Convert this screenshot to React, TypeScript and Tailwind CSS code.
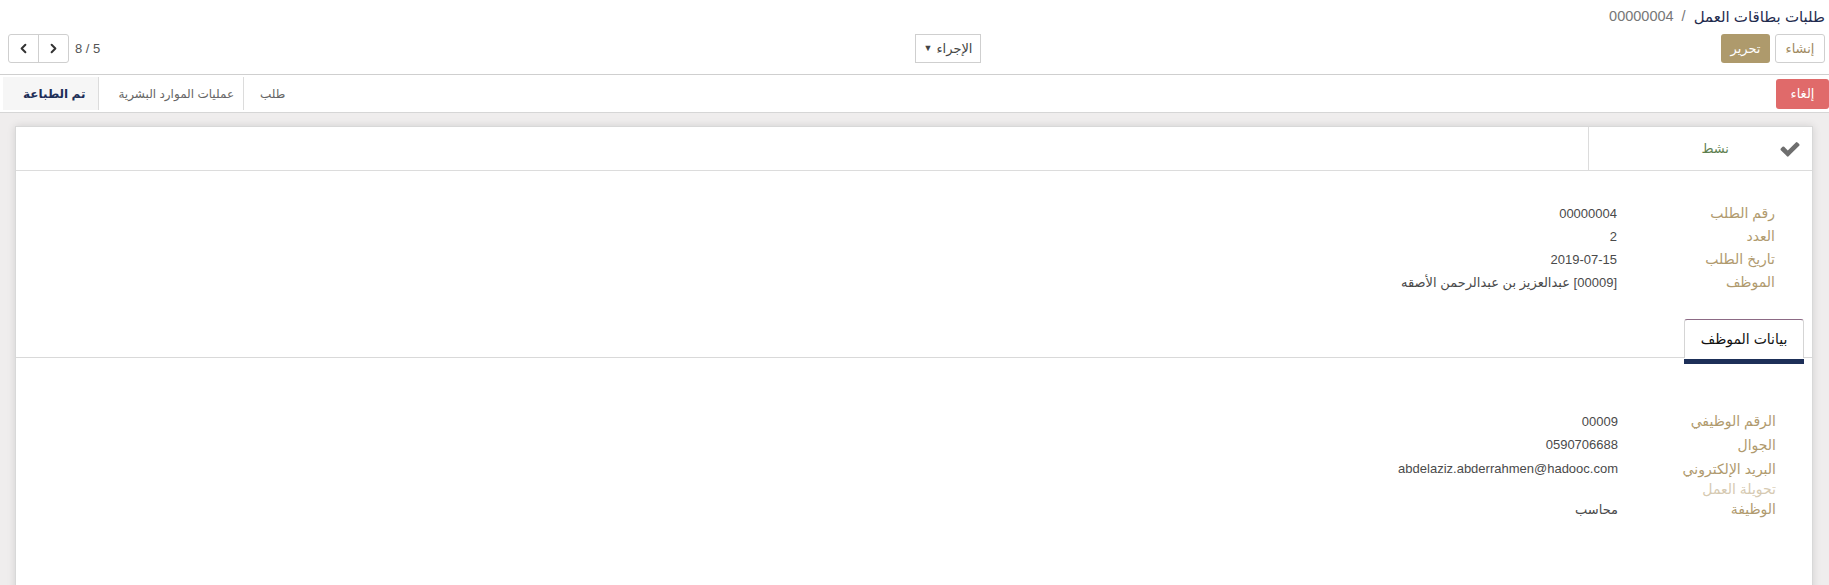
import { ChevronLeft, ChevronRight } from 'lucide-react';

const mainFields = [
  { label: 'رقم الطلب', value: '00000004' },
  { label: 'العدد', value: '2' },
  { label: 'تاريخ الطلب', value: '2019-07-15' },
  { label: 'الموظف', value: '[00009] عبدالعزيز بن عبدالرحمن الأصقه' },
];

const employeeFields = [
  { label: 'الرقم الوظيفي', value: '00009', h: 'h-[23px]' },
  { label: 'الجوال', value: '0590706688', h: 'h-[24px]' },
  { label: 'البريد الإلكتروني', value: 'abdelaziz.abderrahmen@hadooc.com', h: 'h-[24px]' },
  { label: 'تحويلة العمل', value: '', h: 'h-[17px]' },
  { label: 'الوظيفة', value: 'محاسب', h: 'h-[23px]' },
];

const FieldRow = ({ label, value, h = 'h-[23px]' }: { label: string; value: string; h?: string }) => (
  <div className={`flex items-center ${h}`}>
    <span className={`w-[158px] shrink-0 text-[14px] ${value ? 'text-[#b09a6e]' : 'text-[#d6cab2]'}`}>{label}</span>
    <span className="text-[#4a4a4a]">{value}</span>
  </div>
);

const App = () => {
  return (
    <div
      dir="rtl"
      className="h-[585px] w-full overflow-hidden bg-[#efeded] text-[13px] text-[#4c4c4c] [font-family:'Liberation_Sans','DejaVu_Sans',sans-serif]"
    >
      {/* control panel */}
      <div className="border-b border-[#cfcfcf] bg-white pl-[8px] pr-[4px] pt-[5px] pb-[11px]">
        <div className="flex h-[24px] items-center text-[14.5px]">
          <span className="text-[15px] text-[#1f2b4e]">طلبات بطاقات العمل</span>
          <span className="mx-[8px] text-[#777]">/</span>
          <span className="text-[#777]">00000004</span>
        </div>
        <div className="mt-[5px] flex h-[29px] items-stretch">
          <div className="flex w-[844px] shrink-0 gap-[5px]">
            <button className="h-[29px] w-[50px] rounded-[3px] border border-[#cfcfcf] bg-white text-[#9f8a61]">إنشاء</button>
            <button className="h-[29px] w-[49px] rounded-[3px] bg-[#ae9a6c] text-white">تحرير</button>
          </div>
          <button className="flex h-[29px] w-[66px] items-center justify-center gap-[4px] border border-[#cfcfcf] bg-white text-[#444]">
            <span>الإجراء</span>
            <span className="text-[9px]">▼</span>
          </button>
          <div className="flex flex-1 items-center justify-end gap-[6px]">
            <span className="text-[#555]">5 / 8</span>
            <div dir="ltr" className="flex h-[29px] overflow-hidden rounded-[3px] border border-[#cfcfcf]">
              <button className="flex w-[30px] items-center justify-center border-r border-[#cfcfcf] text-[#333]">
                <ChevronLeft size={15} strokeWidth={3.2} />
              </button>
              <button className="flex w-[29px] items-center justify-center text-[#333]">
                <ChevronRight size={15} strokeWidth={3.2} />
              </button>
            </div>
          </div>
        </div>
      </div>

      {/* status bar */}
      <div className="flex h-[38px] items-center justify-between border-b border-[#d6d6d6] bg-white">
        <button className="h-[30px] w-[53px] rounded-[3px] bg-[#e06a6a] text-white">إلغاء</button>
        <div className="ml-[3px] mt-[2px] flex h-[33px] items-stretch self-start text-[12px]">
          <div className="flex items-center border-l border-[#dcdcdc] pl-[16px] pr-[16px] text-[#666]">طلب</div>
          <div className="flex items-center border-l border-[#dcdcdc] pl-[19px] pr-[9px] text-[#666]">عمليات الموارد البشرية</div>
          <div className="flex items-center bg-[#f6f6f6] pl-[20px] pr-[13px] font-bold text-[#1d2f58]">تم الطباعة</div>
        </div>
      </div>

      {/* sheet */}
      <div className="pl-[15px] pr-[16px] pt-[13px]">
        <div className="h-[600px] border border-[#d8d8d8] bg-white shadow-[0_0_8px_rgba(0,0,0,0.12)]">
          <div className="flex h-[44px] border-b border-[#dcdcdc]">
            <div className="flex w-[224px] items-center border-l border-[#dcdcdc] pr-[11px]">
              <svg width="22" height="18" viewBox="0 200 1792 1400" className="fill-[#6e6e6e]">
                <path d="M1671 566q0 40-28 68l-724 724-136 136q-28 28-68 28t-68-28l-136-136-362-362q-28-28-28-68t28-68l136-136q28-28 68-28t68 28l294 295 656-657q28-28 68-28t68 28l136 136q28 28 28 68z" />
              </svg>
              <span className="mr-[50px] text-[#5e7f4f]">نشط</span>
            </div>
          </div>

          <div className="mt-[31px] pr-[37px]">
            {mainFields.map((f) => (
              <FieldRow key={f.label} label={f.label} value={f.value} />
            ))}
          </div>

          <div className="mt-[25px] flex border-b border-[#d9d9d9] pr-[8px]">
            <div className="relative -mb-px flex h-[39px] w-[120px] items-center justify-center rounded-t-[3px] border border-b-0 border-[#d5d5d5] border-t-[#8c6a85] bg-white text-[14px] text-[#111]">
              بيانات الموظف
              <span className="absolute bottom-[-6px] left-[-1px] right-[-1px] h-[5px] bg-[#1d2f58]" />
            </div>
          </div>

          <div className="mt-[52px] pr-[36px]">
            {employeeFields.map((f) => (
              <FieldRow key={f.label} label={f.label} value={f.value} h={f.h} />
            ))}
          </div>
        </div>
      </div>
    </div>
  );
};

export default App;
